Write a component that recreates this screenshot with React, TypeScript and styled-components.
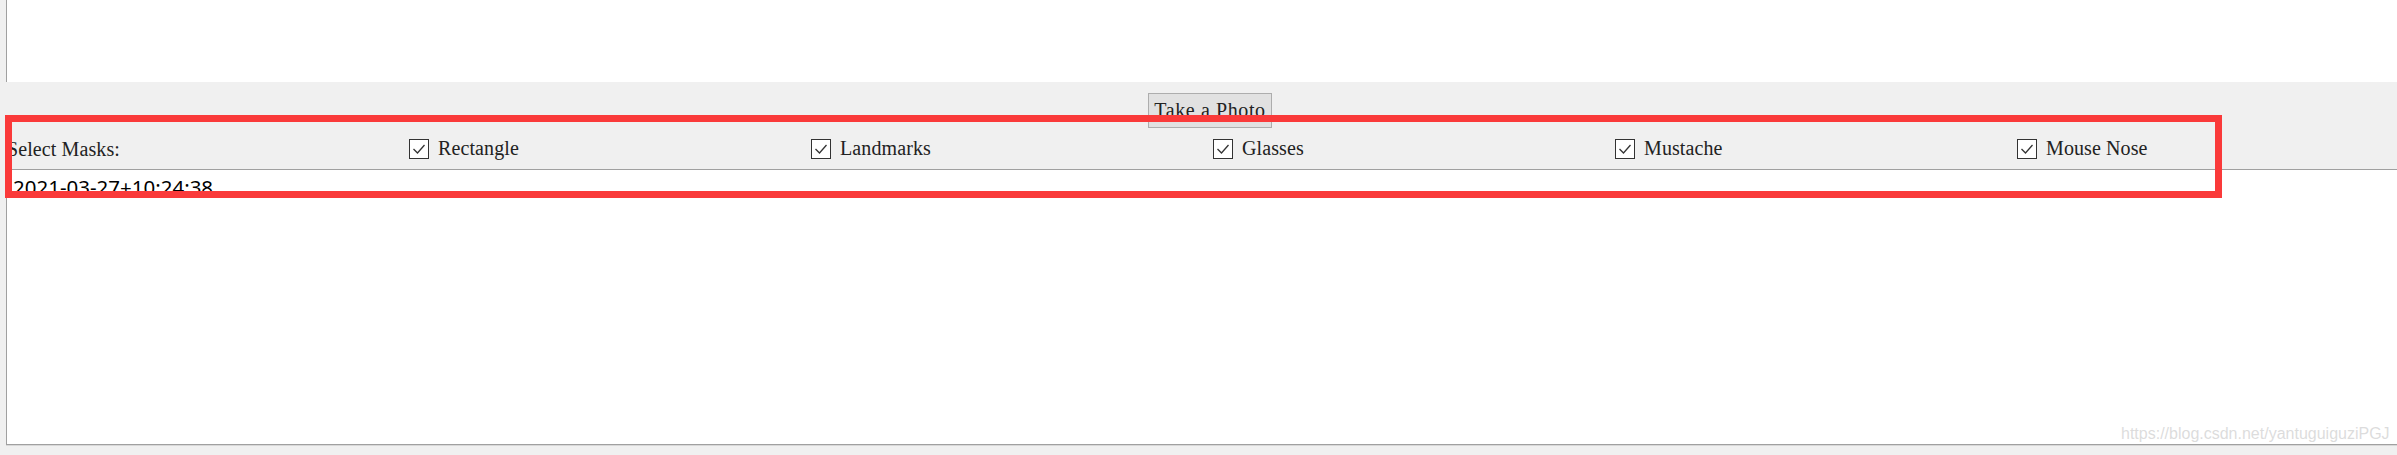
import React from "react";
import styled, { createGlobalStyle } from "styled-components";

const GlobalStyle = createGlobalStyle`
  html, body {
    margin: 0;
    padding: 0;
    background: #f0f0f0;
    overflow: hidden;
  }
`;

const Window = styled.div`
  position: relative;
  width: 2420px;
  height: 455px;
  display: flex;
  flex-direction: column;
  background: #f0f0f0;
  font-family: "Liberation Serif", "Times New Roman", serif;
  color: #222;
`;

const PreviewPanel = styled.div`
  height: 82px;
  margin-left: 6px;
  background: #ffffff;
  border-left: 1px solid #a0a0a0;
`;

const ButtonRow = styled.div`
  display: flex;
  justify-content: center;
  padding-top: 11px;
`;

const PhotoButton = styled.button`
  width: 124px;
  height: 35px;
  padding: 0;
  background: #e1e1e1;
  border: 1px solid #adadad;
  font-family: inherit;
  font-size: 20px;
  letter-spacing: 0.6px;
  color: #222;
`;

const MaskRow = styled.div`
  display: grid;
  grid-template-columns: repeat(6, 402px);
  align-items: center;
  height: 41px;
  padding-left: 7px;
  font-size: 20px;
  letter-spacing: 0.1px;
`;

const MaskLabel = styled.span`
  white-space: nowrap;
  padding-top: 1px;
`;

const CheckItem = styled.label`
  display: flex;
  align-items: center;
  gap: 9px;
  white-space: nowrap;
`;

const Box = styled.span`
  width: 20px;
  height: 20px;
  box-sizing: border-box;
  border: 1.5px solid #333;
  background: #fff;
  display: flex;
  align-items: center;
  justify-content: center;
`;

const LogPanel = styled.div`
  height: 271px;
  margin-left: 6px;
  padding: 3px 6px 0;
  background: #ffffff;
  border-top: 1px solid #a0a0a0;
  border-left: 1px solid #a0a0a0;
  border-bottom: 1px solid #a0a0a0;
  box-shadow: 0 1px 0 #d8d8d8;
  font-family: "Noto Sans", "Open Sans", sans-serif;
  font-size: 20.5px;
  color: #000;
`;

const Highlight = styled.div`
  position: absolute;
  left: 5px;
  top: 115px;
  width: 2217px;
  height: 83px;
  box-sizing: border-box;
  border: 7px solid #fa3a3a;
  pointer-events: none;
`;

const Watermark = styled.div`
  position: absolute;
  left: 2121px;
  top: 425px;
  font-family: "Liberation Sans", Arial, sans-serif;
  font-size: 16px;
  color: rgba(205, 205, 205, 0.7);
  text-shadow: 0 1px 1px rgba(255, 255, 255, 0.6);
  white-space: nowrap;
`;

const CheckIcon = () => (
  <svg width="14" height="12" viewBox="0 0 14 12">
    <polyline points="1.5,6 5.5,10 12.5,2" fill="none" stroke="#333" strokeWidth="1.3" />
  </svg>
);

const masks = ["Rectangle", "Landmarks", "Glasses", "Mustache", "Mouse Nose"];

export default function App() {
  return (
    <>
      <GlobalStyle />
      <Window>
        <PreviewPanel />
        <ButtonRow>
          <PhotoButton>Take a Photo</PhotoButton>
        </ButtonRow>
        <MaskRow>
          <MaskLabel>Select Masks:</MaskLabel>
          {masks.map((m) => (
            <CheckItem key={m}>
              <Box>
                <CheckIcon />
              </Box>
              {m}
            </CheckItem>
          ))}
        </MaskRow>
        <LogPanel>2021-03-27+10:24:38</LogPanel>
        <Highlight />
        <Watermark>https://blog.csdn.net/yantuguiguziPGJ</Watermark>
      </Window>
    </>
  );
}
